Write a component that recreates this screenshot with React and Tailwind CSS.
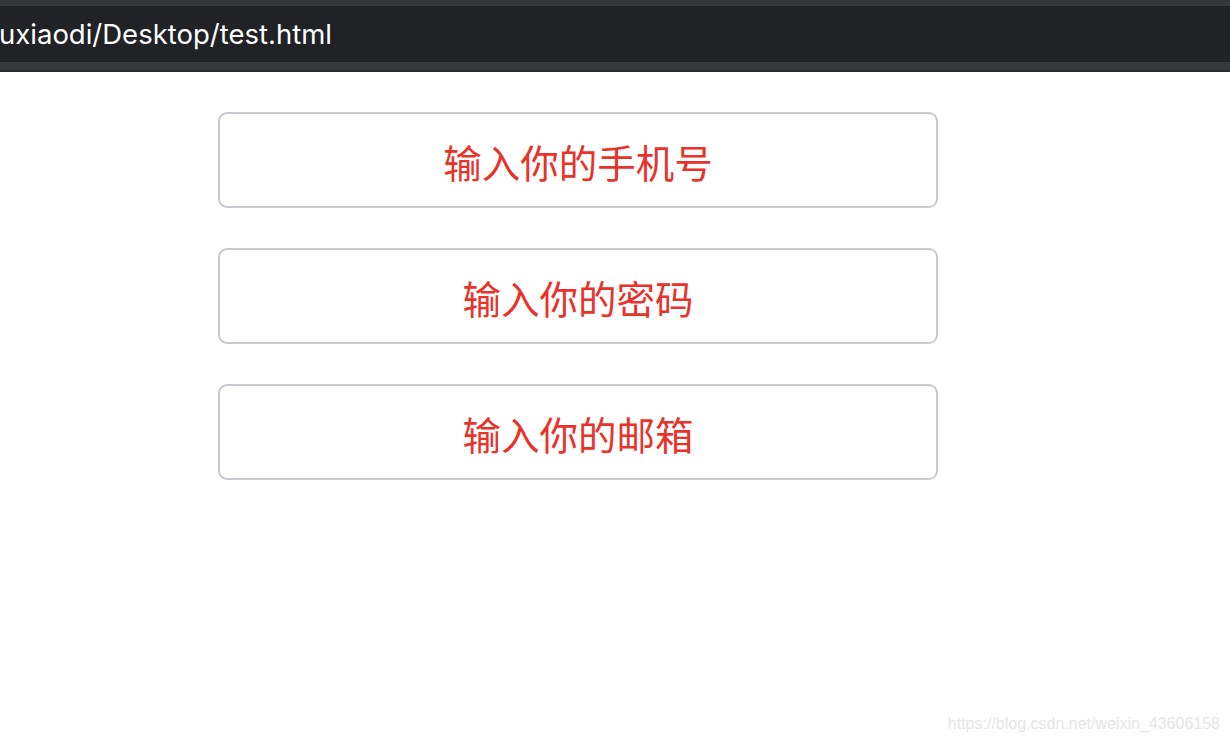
import React from "react";

const fields = ["输入你的手机号", "输入你的密码", "输入你的邮箱"];

const App = () => {
  return (
    <div className="relative w-[1230px] h-[744px] overflow-hidden bg-white">
      <div className="flex flex-col">
        <div className="h-[6px] bg-[#37383c]" />
        <div className="h-[56px] bg-[#212226] flex items-center overflow-hidden">
          <span
            className="text-white text-[27.5px] whitespace-nowrap -ml-[1px] mt-[1px]"
            style={{ fontFamily: "Inter, 'Noto Sans', sans-serif" }}
          >
            uxiaodi/Desktop/test.html
          </span>
        </div>
        <div className="h-[8px] bg-[#37383c]" />
        <div className="h-[2px] bg-[#2a2b2e]" />
      </div>

      <div className="flex flex-col gap-[40px] pt-[40px] pl-[218px]">
        {fields.map((text, i) => (
          <div
            key={i}
            className="w-[720px] h-[96px] border-2 border-[#c8c9cc] rounded-[9px] flex items-center justify-center"
          >
            <span
              className="text-[#e8322a] text-[38.5px] leading-none mt-[2px]"
              style={{ fontFamily: "'Noto Sans CJK SC', sans-serif" }}
            >
              {text}
            </span>
          </div>
        ))}
      </div>

      <div
        className="absolute right-[10px] bottom-[8px] text-[16px] text-[#e6e6e6]"
        style={{ fontFamily: "'Liberation Sans', Arial, sans-serif" }}
      >
        https://blog.csdn.net/weixin_43606158
      </div>
    </div>
  );
};

export default App;
